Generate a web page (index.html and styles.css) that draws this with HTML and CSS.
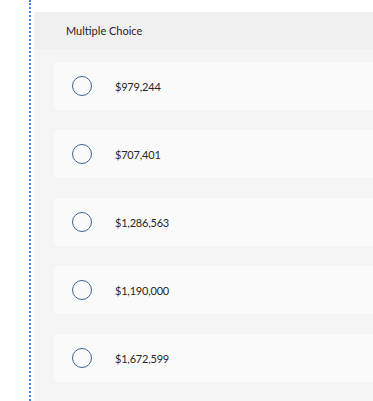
FILE: index.html
```html
<!DOCTYPE html>
<html>
<head>
<meta charset="utf-8">
<link rel="stylesheet" href="styles.css">
</head>
<body>
<div class="page">
  <div class="rail"></div>
  <div class="panel">
    <div class="panel-head">Multiple Choice</div>
    <div class="options">
      <div class="option"><span class="radio"></span><span class="label">$979,244</span></div>
      <div class="option"><span class="radio"></span><span class="label">$707,401</span></div>
      <div class="option"><span class="radio"></span><span class="label">$1,286,563</span></div>
      <div class="option"><span class="radio"></span><span class="label">$1,190,000</span></div>
      <div class="option"><span class="radio"></span><span class="label">$1,672,599</span></div>
    </div>
  </div>
</div>
</body>
</html>
```
FILE: styles.css
```css
html, body {
  margin: 0;
  padding: 0;
  background: #ffffff;
  overflow: hidden;
}
body {
  font-family: "Lato", "Open Sans", sans-serif;
  color: #262626;
}
.page {
  display: flex;
  height: 401px;
  padding-left: 29px;
}
.rail {
  width: 0;
  border-left: 2px dotted #4a7fcf;
  height: 100%;
  flex: none;
}
.panel {
  margin-left: 3px;
  margin-top: 12px;
  flex: 1;
  background: #f5f5f5;
  border-radius: 3px 0 0 0;
}
.panel-head {
  height: 37px;
  display: flex;
  align-items: center;
  padding-left: 32px;
  padding-bottom: 1px;
  box-sizing: border-box;
  background: #f0f0f0;
  font-size: 11px;
  border-radius: 3px 0 0 0;
}
.options {
  padding: 13px 0 0 20px;
  display: flex;
  flex-direction: column;
  gap: 20px;
}
.option {
  height: 48px;
  background: #fafafa;
  border-radius: 3px 0 0 3px;
  display: flex;
  align-items: center;
  padding-left: 18px;
}
.radio {
  width: 18px;
  height: 18px;
  border: 1.5px solid #3a6594;
  border-radius: 50%;
  flex: none;
}
.label {
  margin-left: 23px;
  font-size: 11px;
  letter-spacing: -0.2px;
}
```
